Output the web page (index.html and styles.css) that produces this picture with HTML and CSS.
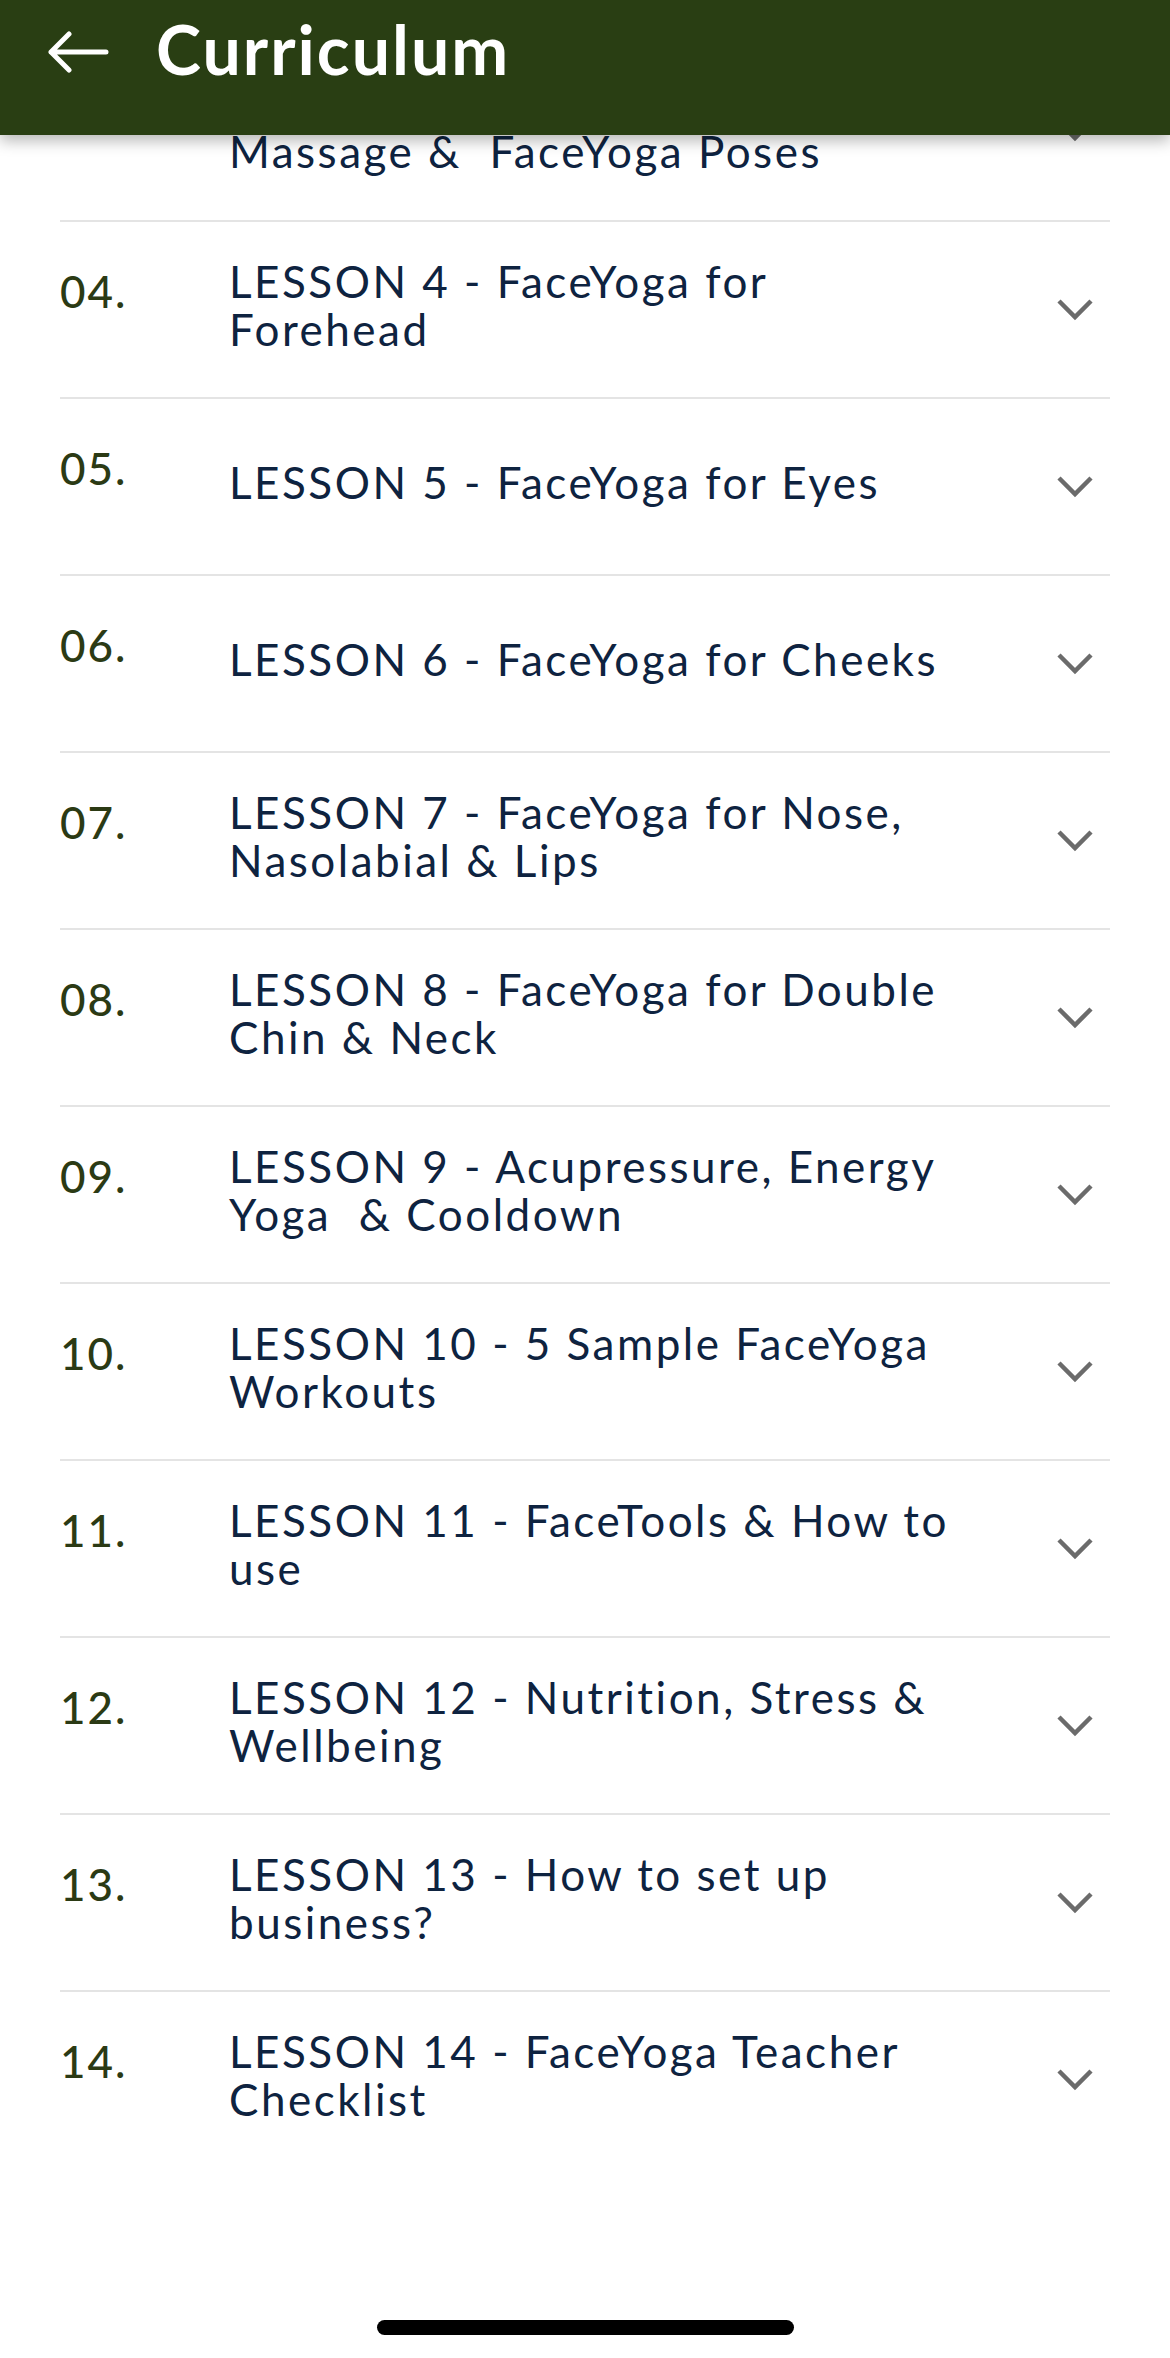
FILE: index.html
```html
<html>
    <head>
        <meta charset="utf-8">
        <title>Curriculum</title>
        <link rel="stylesheet" href="styles.css">
    </head>
    <body>
        <div class="topbar">
            <a class="back">
                <svg width="62" height="42" viewBox="0 0 62 42">
                    <path d="M59 21 H4 M22 3 L4 21 L22 39" fill="none" stroke="#fff" stroke-width="5" stroke-linecap="round" stroke-linejoin="round"/>
                </svg>
            </a>
            <h1 class="topbar-title">Curriculum</h1>
        </div>

        <ul class="lessons">
            <!-- aula 3, metade de cima fica escondida atras da barra -->
            <li class="lesson lesson-partial">
                <span class="lesson-num"></span>
                <span class="lesson-name">Massage &amp;&nbsp; FaceYoga Poses</span>
                <svg class="chevron" width="36" height="7" viewBox="0 15 36 7"><path d="M2 2 L18 18 L34 2" fill="none" stroke="#6b6b6b" stroke-width="4.5"/></svg>
            </li>
            <li class="lesson">
                <span class="lesson-num">04.</span>
                <span class="lesson-name">LESSON 4 - FaceYoga for Forehead</span>
                <svg class="chevron" width="36" height="22" viewBox="0 0 36 22"><path d="M2 2 L18 18 L34 2" fill="none" stroke="#6b6b6b" stroke-width="4.5"/></svg>
            </li>
            <li class="lesson">
                <span class="lesson-num">05.</span>
                <span class="lesson-name">LESSON 5 - FaceYoga for Eyes</span>
                <svg class="chevron" width="36" height="22" viewBox="0 0 36 22"><path d="M2 2 L18 18 L34 2" fill="none" stroke="#6b6b6b" stroke-width="4.5"/></svg>
            </li>
            <li class="lesson">
                <span class="lesson-num">06.</span>
                <span class="lesson-name">LESSON 6 - FaceYoga for Cheeks</span>
                <svg class="chevron" width="36" height="22" viewBox="0 0 36 22"><path d="M2 2 L18 18 L34 2" fill="none" stroke="#6b6b6b" stroke-width="4.5"/></svg>
            </li>
            <li class="lesson">
                <span class="lesson-num">07.</span>
                <span class="lesson-name">LESSON 7 - FaceYoga for Nose, Nasolabial &amp; Lips</span>
                <svg class="chevron" width="36" height="22" viewBox="0 0 36 22"><path d="M2 2 L18 18 L34 2" fill="none" stroke="#6b6b6b" stroke-width="4.5"/></svg>
            </li>
            <li class="lesson">
                <span class="lesson-num">08.</span>
                <span class="lesson-name">LESSON 8 - FaceYoga for Double Chin &amp; Neck</span>
                <svg class="chevron" width="36" height="22" viewBox="0 0 36 22"><path d="M2 2 L18 18 L34 2" fill="none" stroke="#6b6b6b" stroke-width="4.5"/></svg>
            </li>
            <li class="lesson">
                <span class="lesson-num">09.</span>
                <span class="lesson-name">LESSON 9 - Acupressure, Energy Yoga&nbsp; &amp; Cooldown</span>
                <svg class="chevron" width="36" height="22" viewBox="0 0 36 22"><path d="M2 2 L18 18 L34 2" fill="none" stroke="#6b6b6b" stroke-width="4.5"/></svg>
            </li>
            <li class="lesson">
                <span class="lesson-num">10.</span>
                <span class="lesson-name">LESSON 10 - 5 Sample FaceYoga Workouts</span>
                <svg class="chevron" width="36" height="22" viewBox="0 0 36 22"><path d="M2 2 L18 18 L34 2" fill="none" stroke="#6b6b6b" stroke-width="4.5"/></svg>
            </li>
            <li class="lesson">
                <span class="lesson-num">11.</span>
                <span class="lesson-name">LESSON 11 - FaceTools &amp; How to use</span>
                <svg class="chevron" width="36" height="22" viewBox="0 0 36 22"><path d="M2 2 L18 18 L34 2" fill="none" stroke="#6b6b6b" stroke-width="4.5"/></svg>
            </li>
            <li class="lesson">
                <span class="lesson-num">12.</span>
                <span class="lesson-name">LESSON 12 - Nutrition, Stress &amp; Wellbeing</span>
                <svg class="chevron" width="36" height="22" viewBox="0 0 36 22"><path d="M2 2 L18 18 L34 2" fill="none" stroke="#6b6b6b" stroke-width="4.5"/></svg>
            </li>
            <li class="lesson">
                <span class="lesson-num">13.</span>
                <span class="lesson-name">LESSON 13 - How to set up business?</span>
                <svg class="chevron" width="36" height="22" viewBox="0 0 36 22"><path d="M2 2 L18 18 L34 2" fill="none" stroke="#6b6b6b" stroke-width="4.5"/></svg>
            </li>
            <li class="lesson">
                <span class="lesson-num">14.</span>
                <span class="lesson-name">LESSON 14 - FaceYoga Teacher Checklist</span>
                <svg class="chevron" width="36" height="22" viewBox="0 0 36 22"><path d="M2 2 L18 18 L34 2" fill="none" stroke="#6b6b6b" stroke-width="4.5"/></svg>
            </li>
        </ul>

        <div class="home-bar"></div>
    </body>
</html>
```

FILE: styles.css
```css
*{
    box-sizing: border-box;
}
body{
    margin: 0;
    background-color: #fff;
    font-family: 'Lato', 'Noto Sans', sans-serif;
}

/* barra verde do topo */
div.topbar{
    position: relative;
    z-index: 2;
    height: 135px;
    background-color: #293e13;
    box-shadow: 0 6px 14px rgba(0, 0, 0, 0.28);
    display: flex;
    align-items: flex-start;
    padding: 0 0 0 47px;
}
a.back{
    display: block;
    margin-top: 31px;
    width: 62px;
    height: 42px;
}
a.back svg{
    display: block;
}
h1.topbar-title{
    margin: 9px 0 0 47px;
    color: #fff;
    font-size: 68px;
    font-weight: 700;
    letter-spacing: 2px;
    line-height: 80px;
}

/* lista das aulas */
ul.lessons{
    list-style: none;
    margin: 0;
    padding: 0 60px;
}
li.lesson{
    display: flex;
    align-items: center;
    height: 177px;
    border-top: 2px solid #e4e4e4;
}
span.lesson-num{
    align-self: flex-start;
    width: 169px;
    padding-top: 45px;
    color: #2b3a14;
    font-size: 44px;
    font-weight: 500;
    letter-spacing: 2px;
    line-height: 48px;
}
span.lesson-name{
    flex: 1;
    max-width: 735px;
    padding-bottom: 10px;
    color: #0e2340;
    font-size: 44px;
    letter-spacing: 2.5px;
    line-height: 48px;
}
svg.chevron{
    margin: 0 17px 0 auto;
}

/* so aparece a segunda linha da aula 3 */
li.lesson-partial{
    height: 85px;
    border-top: none;
    align-items: flex-start;
}
li.lesson-partial span.lesson-name{
    padding: 1px 0 0 0;
    line-height: 30px;
}
li.lesson-partial svg.chevron{
    display: block;
}

div.home-bar{
    width: 417px;
    height: 15px;
    margin: 153px auto 0 auto;
    border-radius: 8px;
    background-color: #000;
}
```
